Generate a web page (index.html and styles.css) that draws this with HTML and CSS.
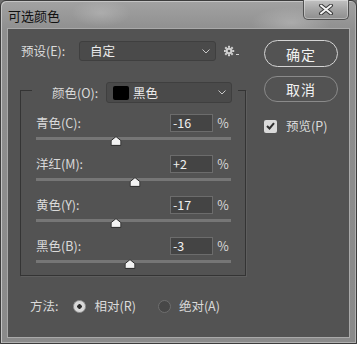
FILE: index.html
```html
<!DOCTYPE html>
<html>
<head>
<meta charset="utf-8">
<link rel="stylesheet" href="styles.css">
</head>
<body>
<div class="window">
  <div class="titlebar">
    <span class="title">可选颜色</span>
    <div class="close">
      <svg width="16" height="11" viewBox="0 0 16 11"><path d="M3 1.5 L13 9.5 M13 1.5 L3 9.5" stroke="#3a3a3a" stroke-width="4" stroke-linecap="round"/><path d="M3 1.5 L13 9.5 M13 1.5 L3 9.5" stroke="#f4f4f4" stroke-width="2" stroke-linecap="round"/></svg>
    </div>
  </div>
  <div class="content">
    <div class="left">
      <div class="preset-row">
        <span class="lbl preset-lbl">预设(E):</span>
        <div class="select preset-select">
          <span class="sel-text">自定</span>
          <svg class="chev" width="8" height="5" viewBox="0 0 8 5"><path d="M0.5 0.5 L4 4 L7.5 0.5" fill="none" stroke="#c8c8c8" stroke-width="1"/></svg>
        </div>
        <svg class="gear" width="18" height="12" viewBox="0 0 18 12">
          <g fill="#d0d0d0">
            <circle cx="5" cy="6" r="3.3"/>
            <rect x="4" y="0.8" width="2" height="2"/>
            <rect x="4" y="9.2" width="2" height="2"/>
            <rect x="-0.2" y="5" width="2" height="2"/>
            <rect x="8.2" y="5" width="2" height="2"/>
            <rect x="1" y="2" width="2" height="2" transform="rotate(45 2 3)"/>
            <rect x="7" y="2" width="2" height="2" transform="rotate(45 8 3)"/>
            <rect x="1" y="8" width="2" height="2" transform="rotate(45 2 9)"/>
            <rect x="7" y="8" width="2" height="2" transform="rotate(45 8 9)"/>
            <rect x="12" y="9" width="3" height="1"/>
          </g>
          <circle cx="5" cy="6" r="1.3" fill="#535353"/>
        </svg>
      </div>

      <div class="group">
        <div class="group-head">
          <span class="lbl">颜色(O):</span>
          <div class="select color-select">
            <span class="swatch"></span>
            <span class="sel-text2">黑色</span>
            <svg class="chev" width="8" height="5" viewBox="0 0 8 5"><path d="M0.5 0.5 L4 4 L7.5 0.5" fill="none" stroke="#c8c8c8" stroke-width="1"/></svg>
          </div>
        </div>
        <div class="sliders">
          <div class="slider">
            <div class="srow"><span class="lbl">青色(C):</span><div class="num">-16</div><span class="pct">%</span></div>
            <div class="track"><span class="thumb" style="left:80px"><svg width="11" height="10" viewBox="0 0 11 10"><path d="M5.5 0.6 L10.4 4.6 L10.4 9.4 L0.6 9.4 L0.6 4.6 Z" fill="#f2f2f2" stroke="#262626" stroke-width="1"/></svg></span></div>
          </div>
          <div class="slider">
            <div class="srow"><span class="lbl">洋红(M):</span><div class="num">+2</div><span class="pct">%</span></div>
            <div class="track"><span class="thumb" style="left:99px"><svg width="11" height="10" viewBox="0 0 11 10"><path d="M5.5 0.6 L10.4 4.6 L10.4 9.4 L0.6 9.4 L0.6 4.6 Z" fill="#f2f2f2" stroke="#262626" stroke-width="1"/></svg></span></div>
          </div>
          <div class="slider">
            <div class="srow"><span class="lbl">黄色(Y):</span><div class="num">-17</div><span class="pct">%</span></div>
            <div class="track"><span class="thumb" style="left:80px"><svg width="11" height="10" viewBox="0 0 11 10"><path d="M5.5 0.6 L10.4 4.6 L10.4 9.4 L0.6 9.4 L0.6 4.6 Z" fill="#f2f2f2" stroke="#262626" stroke-width="1"/></svg></span></div>
          </div>
          <div class="slider">
            <div class="srow"><span class="lbl">黑色(B):</span><div class="num">-3</div><span class="pct">%</span></div>
            <div class="track"><span class="thumb" style="left:94px"><svg width="11" height="10" viewBox="0 0 11 10"><path d="M5.5 0.6 L10.4 4.6 L10.4 9.4 L0.6 9.4 L0.6 4.6 Z" fill="#f2f2f2" stroke="#262626" stroke-width="1"/></svg></span></div>
          </div>
        </div>
      </div>

      <div class="method">
        <span class="lbl">方法:</span>
        <span class="radio checked"></span>
        <span class="lbl rlabel">相对(R)</span>
        <span class="radio second"></span>
        <span class="lbl rlabel">绝对(A)</span>
      </div>
    </div>

    <div class="right">
      <div class="btn primary">确定</div>
      <div class="btn secondary">取消</div>
      <div class="check">
        <span class="box"><svg width="9" height="8" viewBox="0 0 9 8"><path d="M1 4 L3.5 6.5 L8 1.2" fill="none" stroke="#2e2e2e" stroke-width="2"/></svg></span>
        <span class="lbl">预览(P)</span>
      </div>
    </div>
  </div>
</div>
</body>
</html>
```

FILE: styles.css
```css
* { box-sizing: border-box; }

html, body {
  margin: 0;
  padding: 0;
  width: 357px;
  height: 344px;
  overflow: hidden;
  background: #6e6e6e;
}

body {
  font-family: "Noto Sans CJK SC", "Noto Sans", "DejaVu Sans", sans-serif;
  font-size: 12px;
}

.window {
  width: 357px;
  height: 344px;
  border: 1px solid #3c3c3c;
  border-radius: 6px 6px 0 0;
  background:
    radial-gradient(ellipse 30px 14px at 100px 12px, rgba(255,255,255,0.18), rgba(255,255,255,0) 100%),
    radial-gradient(ellipse 40px 16px at 290px 22px, rgba(255,255,255,0.22), rgba(255,255,255,0) 100%),
    linear-gradient(180deg, #a2a2a2 0%, #8e8e8e 9%, #8a8a8a 100%);
  box-shadow: inset 1px 1px 0 #c4c4c4, inset -1px -1px 0 #b0b0b0;
  display: flex;
  flex-direction: column;
}

.titlebar {
  height: 27px;
  display: flex;
  align-items: flex-start;
  justify-content: space-between;
  padding-left: 7px;
  padding-right: 7px;
}

.title {
  color: #111;
  font-size: 13px;
  line-height: 14px;
  margin-top: 8px;
}

.close {
  width: 46px;
  height: 20px;
  margin-top: -1px;
  border: 1px solid #505050;
  border-top: none;
  border-radius: 0 0 5px 5px;
  background: linear-gradient(180deg, #c2c2c2 0%, #a4a4a4 50%, #8e8e8e 100%);
  box-shadow: inset 0 0 0 1px rgba(255,255,255,0.35);
  display: flex;
  align-items: center;
  justify-content: center;
}

.content {
  margin: 0 6px 0 6px;
  height: 310px;
  background: #535353;
  border: 1px solid #a9a9a9;
  display: flex;
}

.left {
  width: 238px;
  padding-left: 12px;
  display: flex;
  flex-direction: column;
}

.lbl {
  color: #dadada;
  font-size: 12.5px;
  line-height: 14px;
  white-space: nowrap;
}

.preset-row {
  margin-top: 12px;
  height: 20px;
  display: flex;
  align-items: center;
}

.preset-lbl {
  width: 58px;
  margin-left: 1px;
}

.select {
  height: 20px;
  background: #4a4a4a;
  border: 1px solid #3f3f3f;
  border-radius: 3px;
  display: flex;
  align-items: center;
  color: #ececec;
  font-size: 12.5px;
}

.preset-select {
  width: 137px;
  padding-left: 10px;
  padding-right: 5px;
}

.sel-text { flex: 1; line-height: 14px; }

.chev { flex: none; }

.gear {
  margin-left: 8px;
  margin-top: -1px;
}

.group {
  margin-top: 29px;
  width: 226px;
  height: 186px;
  border: 1px solid #343434;
  box-shadow: 1px 1px 0 #5e5e5e;
}

.group-head {
  margin-top: -9px;
  margin-left: 11px;
  width: 206px;
  height: 21px;
  padding-left: 20px;
  padding-right: 6px;
  background: #535353;
  display: flex;
  align-items: center;
}

.color-select {
  margin-left: auto;
  width: 126px;
  height: 21px;
  padding-left: 6px;
  padding-right: 5px;
}

.swatch {
  width: 16px;
  height: 14px;
  background: #000;
  border-radius: 2px;
  margin-right: 4px;
}

.sel-text2 { flex: 1; line-height: 14px; }

.sliders {
  padding: 10px 14px 0 15px;
}

.slider + .slider { margin-top: 14px; }

.srow {
  height: 18px;
  display: grid;
  grid-template-columns: 1fr 43px 18px;
  align-items: center;
}

.num {
  height: 18px;
  background: #444444;
  border: 1px solid #6c6c6c;
  color: #f0f0f0;
  font-size: 12.5px;
  line-height: 16px;
  padding-left: 2px;
}

.pct {
  color: #d9d9d9;
  font-size: 12.5px;
  text-align: center;
  padding-left: 2px;
}

.track {
  position: relative;
  margin-top: 6px;
  height: 3px;
  background: #767676;
}

.thumb {
  position: absolute;
  top: -1px;
  width: 11px;
  height: 10px;
  transform: translateX(-50%);
  display: block;
}

.thumb svg { display: block; }

.method {
  margin-top: 23px;
  padding-left: 10px;
  height: 14px;
  display: flex;
  align-items: center;
}

.radio {
  width: 13px;
  height: 13px;
  border-radius: 50%;
  flex: none;
}

.radio.checked {
  margin-left: 15px;
  background: radial-gradient(circle, #2c2c2c 0 2px, #d8d8d8 2.5px);
  border: 1px solid #9a9a9a;
}

.radio.second {
  margin-left: 22px;
  background: #474747;
  border: 1px solid #6e6e6e;
}

.rlabel { margin-left: 8px; }

.right {
  margin-left: 18px;
  width: 74px;
  display: flex;
  flex-direction: column;
}

.btn {
  width: 74px;
  border-radius: 14px;
  color: #f2f2f2;
  font-size: 14px;
  display: flex;
  align-items: center;
  justify-content: center;
  letter-spacing: 1px;
}

.btn.primary {
  margin-top: 11px;
  height: 27px;
  border: 1.5px solid #d4d4d4;
}

.btn.secondary {
  margin-top: 9px;
  height: 26px;
  border: 1px solid #8a8a8a;
}

.check {
  margin-top: 17px;
  display: flex;
  align-items: center;
}

.box {
  width: 13px;
  height: 13px;
  background: #dadada;
  border-radius: 2px;
  display: flex;
  align-items: center;
  justify-content: center;
  margin-right: 9px;
}
```
